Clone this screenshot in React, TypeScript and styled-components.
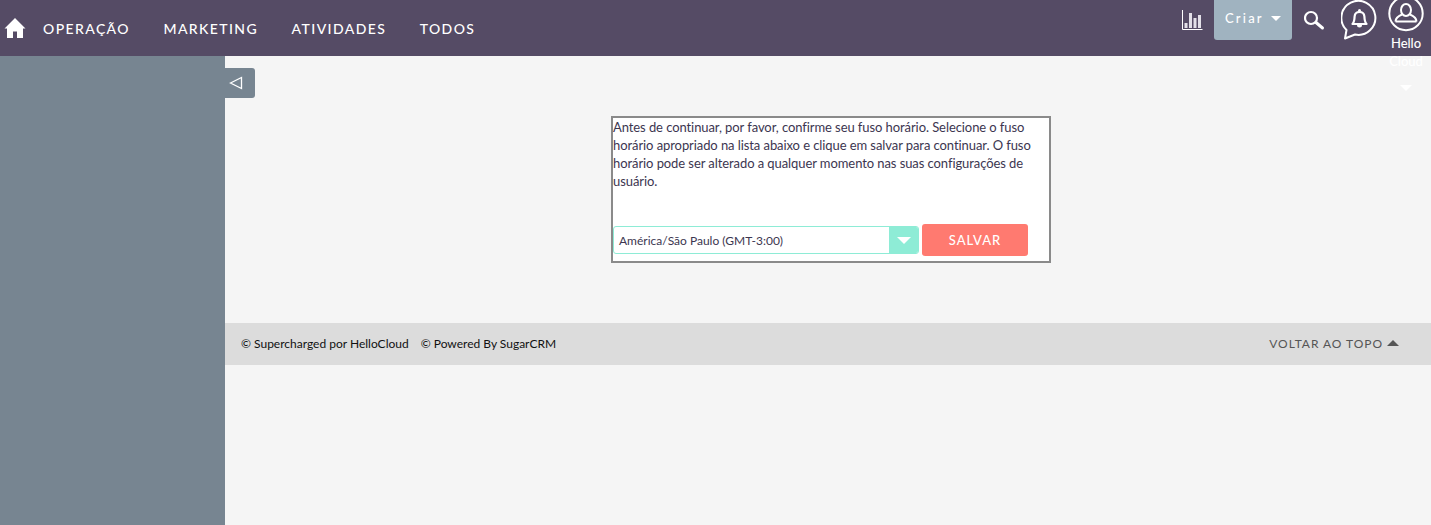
import React from "react";
import styled, { createGlobalStyle } from "styled-components";

const Global = createGlobalStyle`
  html, body { margin: 0; padding: 0; background: #f5f5f5; }
  body { font-family: Lato, "Open Sans", sans-serif; overflow: hidden; }
  * { box-sizing: border-box; }
`;

const Page = styled.div`
  width: 1431px;
  height: 525px;
  display: flex;
  flex-direction: column;
`;

const Nav = styled.header`
  height: 56px;
  flex: none;
  background: #554b65;
  display: flex;
  justify-content: space-between;
  position: relative;
  z-index: 2;
`;

const NavLeft = styled.nav`
  display: flex;
  align-items: center;
  padding: 1px 0 0 4px;
`;

const HomeLink = styled.a`
  display: flex;
  width: 22px;
  margin: 1px 17px 0 0;
`;

const NavItem = styled.a`
  color: #fff;
  font-size: 14px;
  font-weight: 500;
  letter-spacing: 1.4px;
  margin-right: 33.5px;
  white-space: nowrap;
`;

const NavRight = styled.div`
  display: flex;
  align-items: flex-start;
`;

const IconSlot = styled.div<{ $w: number; $mt: number }>`
  width: ${(p) => p.$w}px;
  margin-top: ${(p) => p.$mt}px;
  display: flex;
  flex: none;
`;

const CreateButton = styled.button`
  width: 78px;
  height: 40px;
  margin: 0 12px 0 11px;
  border: 0;
  border-radius: 0 0 3px 3px;
  background: #a0b3c0;
  color: #fff;
  font: 500 13px Lato, sans-serif;
  letter-spacing: 2.2px;
  display: flex;
  align-items: center;
  padding: 0 0 4px 11px;
`;

const Caret = styled.span<{ $color?: string; $w?: number; $h?: number; $up?: boolean }>`
  display: inline-block;
  width: 0;
  height: 0;
  border-left: ${(p) => p.$w ?? 5}px solid transparent;
  border-right: ${(p) => p.$w ?? 5}px solid transparent;
  ${(p) => (p.$up ? "border-bottom" : "border-top")}: ${(p) => p.$h ?? 5}px solid ${(p) => p.$color ?? "#fff"};
`;

const CreateCaret = styled(Caret)`
  margin-left: 7px;
`;

const UserMenu = styled.div`
  width: 36px;
  margin-left: 9px;
  margin-right: 7px;
  display: flex;
  flex-direction: column;
  align-items: center;
  color: #fff;
  font-size: 13px;
  font-weight: 500;
  line-height: 18px;
  text-align: center;
`;

const UserCaret = styled(Caret)`
  margin-top: 15px;
`;

const UserName = styled.div`
  margin-top: 2px;
`;

const Body = styled.div`
  flex: 1;
  display: flex;
  min-height: 0;
`;

const Sidebar = styled.aside`
  width: 225px;
  flex: none;
  background: #778591;
`;

const Main = styled.main`
  flex: 1;
  position: relative;
  display: flex;
  flex-direction: column;
`;

const Toggle = styled.button`
  position: absolute;
  left: 0;
  top: 12px;
  width: 30px;
  height: 30px;
  border: 0;
  padding: 0 0 0 4px;
  border-radius: 0 3px 3px 0;
  background: #778591;
  display: flex;
  align-items: center;
`;

const Content = styled.div`
  height: 267px;
  flex: none;
  padding: 60px 0 0 386px;
`;

const Dialog = styled.section`
  width: 440px;
  height: 147px;
  background: #fff;
  border: 2px solid #8a8a8a;
  display: flex;
  flex-direction: column;
`;

const Message = styled.p`
  margin: 0;
  height: 106px;
  color: #3c3650;
  font-size: 13px;
  letter-spacing: -0.08px;
  line-height: 18px;
`;

const Form = styled.div`
  display: flex;
  align-items: center;
`;

const Select = styled.div`
  width: 306px;
  height: 28px;
  border: 1px solid #8eecd6;
  border-radius: 3px;
  background: #fff;
  display: flex;
  align-items: stretch;
  overflow: hidden;
`;

const SelectText = styled.span`
  flex: 1;
  color: #3c3650;
  font-size: 12px;
  line-height: 27px;
  padding-left: 5px;
`;

const SelectArrow = styled.span`
  width: 29px;
  background: #8eecd6;
  display: flex;
  align-items: center;
  justify-content: center;
`;

const SaveButton = styled.button`
  width: 106px;
  height: 32px;
  margin-left: 3px;
  border: 0;
  border-radius: 3px;
  background: #ff7a70;
  color: #fff;
  font: 500 13px Lato, sans-serif;
  letter-spacing: 1px;
`;

const Footer = styled.footer`
  height: 42px;
  flex: none;
  background: #dcdcdc;
  display: flex;
  align-items: center;
  justify-content: space-between;
  padding: 0 32px 2px 16px;
`;

const Credits = styled.div`
  display: flex;
  gap: 12px;
  color: #111;
  font-size: 12px;
`;

const BackToTop = styled.a`
  display: flex;
  align-items: center;
  gap: 4px;
  color: #555;
  font-size: 12px;
  letter-spacing: 0.95px;
`;

const Home = () => (
  <svg width="22" height="22" viewBox="0 0 22 22" fill="#fff">
    <path d="M11 0 L21.5 10.5 L19 10.5 L19 20 L13 20 L13 13.5 L9 13.5 L9 20 L3 20 L3 10.5 L.5 10.5 Z" />
  </svg>
);

const Chart = () => (
  <svg width="21" height="21" viewBox="0 0 21 21" fill="none">
    <path d="M.5 0V19.5H20.5" stroke="#fff" strokeWidth="1" />
    <rect x="2.5" y="13" width="3" height="5" fill="#e3e0e8" />
    <rect x="7" y="3" width="3" height="15" fill="#e3e0e8" />
    <rect x="11.5" y="8" width="3" height="10" fill="#e3e0e8" />
    <rect x="16" y="5" width="3" height="13" fill="#e3e0e8" />
  </svg>
);

const Search = () => (
  <svg width="22" height="22" viewBox="0 0 22 22" fill="none" stroke="#fff">
    <circle cx="7" cy="9" r="6" strokeWidth="2.2" />
    <path d="M12 13.5 L18.5 19" strokeWidth="3" strokeLinecap="round" />
  </svg>
);

const Bell = () => (
  <svg width="38" height="40" viewBox="0 0 38 40" fill="none" stroke="#fff">
    <path d="M4 38.5 L5.5 30 A17 17 0 1 1 14 34.5 Z" strokeWidth="2" strokeLinejoin="round" />
    <path d="M11.5 24 H25.5 C23.7 22 23.5 19.5 23.4 16.5 C23.2 13.6 21.2 12 18.5 12 C15.8 12 13.8 13.6 13.6 16.5 C13.5 19.5 13.3 22 11.5 24 Z" strokeWidth="2.2" strokeLinejoin="round" />
    <path d="M16 25 A2.5 2.5 0 0 0 21 25 Z" fill="#fff" stroke="none" />
    <circle cx="18.5" cy="10.5" r="1.5" fill="#fff" stroke="none" />
  </svg>
);

const User = () => (
  <svg width="36" height="32" viewBox="0 0 36 32" fill="none" stroke="#fff">
    <circle cx="18" cy="13.5" r="16.7" strokeWidth="2" />
    <ellipse cx="18" cy="10" rx="5" ry="6" strokeWidth="2" />
    <path d="M7.5 21.5 C7.5 17.5 11 15.8 14 14.5 M28.5 21.5 C28.5 17.5 25 15.8 22 14.5 M7.5 21.5 H28.5" strokeWidth="2" strokeLinejoin="round" />
  </svg>
);

const ToggleIcon = () => (
  <svg width="14" height="14" viewBox="0 0 14 14" fill="none">
    <path d="M1.5 7 L12.5 1.5 V12.5 Z" stroke="#fff" strokeWidth="1.3" />
  </svg>
);

const menu = ["OPERAÇÃO", "MARKETING", "ATIVIDADES", "TODOS"];

export default function App() {
  return (
    <Page>
      <Global />
      <Nav>
        <NavLeft>
          <HomeLink><Home /></HomeLink>
          {menu.map((m) => (
            <NavItem key={m}>{m}</NavItem>
          ))}
        </NavLeft>
        <NavRight>
          <IconSlot $w={21} $mt={10}><Chart /></IconSlot>
          <CreateButton>Criar<CreateCaret /></CreateButton>
          <IconSlot $w={37} $mt={9}><Search /></IconSlot>
          <IconSlot $w={38} $mt={0}><Bell /></IconSlot>
          <UserMenu>
            <User />
            <UserName>Hello<br />Cloud</UserName>
            <UserCaret $w={6.5} $h={6} />
          </UserMenu>
        </NavRight>
      </Nav>
      <Body>
        <Sidebar />
        <Main>
          <Toggle aria-label="Recolher"><ToggleIcon /></Toggle>
          <Content>
            <Dialog>
              <Message>
                Antes de continuar, por favor, confirme seu fuso horário. Selecione o fuso horário apropriado na lista abaixo e clique em salvar para continuar. O fuso horário pode ser alterado a qualquer momento nas suas configurações de usuário.
              </Message>
              <Form>
                <Select>
                  <SelectText>América/São Paulo (GMT-3:00)</SelectText>
                  <SelectArrow><Caret $w={7} $h={7} /></SelectArrow>
                </Select>
                <SaveButton>SALVAR</SaveButton>
              </Form>
            </Dialog>
          </Content>
          <Footer>
            <Credits>
              <span>© Supercharged por HelloCloud</span>
              <span>© Powered By SugarCRM</span>
            </Credits>
            <BackToTop>VOLTAR AO TOPO <Caret $up $color="#555" $w={6} $h={6} /></BackToTop>
          </Footer>
        </Main>
      </Body>
    </Page>
  );
}
